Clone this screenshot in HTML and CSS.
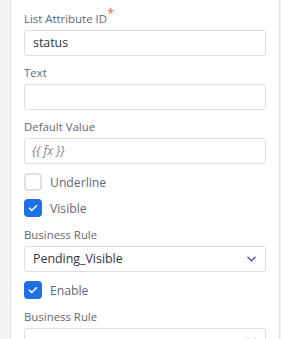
FILE: index.html
```html
<!DOCTYPE html>
<html lang="en">
<head>
<meta charset="UTF-8">
<meta name="viewport" content="width=device-width, initial-scale=1.0">
<title>Properties</title>
<link rel="stylesheet" href="styles.css">
</head>
<body>
<div class="panel">

  <div class="field">
    <label class="field-label">List Attribute ID<span class="req">*</span></label>
    <div class="input">status</div>
  </div>

  <div class="field">
    <label class="field-label">Text</label>
    <div class="input"></div>
  </div>

  <div class="field">
    <label class="field-label">Default Value</label>
    <div class="input placeholder">{{ fx }}</div>
  </div>

  <div class="check">
    <span class="box"></span>
    <span class="check-label">Underline</span>
  </div>

  <div class="check">
    <span class="box on">
      <svg viewBox="0 0 16 16"><path d="M4 8.3l2.6 2.6L12 5.4" fill="none" stroke="#fff" stroke-width="1.7" stroke-linecap="round" stroke-linejoin="round"/></svg>
    </span>
    <span class="check-label">Visible</span>
  </div>

  <div class="field">
    <label class="field-label">Business Rule</label>
    <div class="input select">
      <span>Pending_Visible</span>
      <svg class="chev" viewBox="0 0 10 6" width="9" height="6"><path d="M1 1l4 4 4-4" fill="none" stroke="#4a5d8a" stroke-width="1.6" stroke-linecap="round" stroke-linejoin="round"/></svg>
    </div>
  </div>

  <div class="check">
    <span class="box on">
      <svg viewBox="0 0 16 16"><path d="M4 8.3l2.6 2.6L12 5.4" fill="none" stroke="#fff" stroke-width="1.7" stroke-linecap="round" stroke-linejoin="round"/></svg>
    </span>
    <span class="check-label">Enable</span>
  </div>

  <div class="field">
    <label class="field-label">Business Rule</label>
    <div class="input select">
      <span></span>
      <svg class="chev" viewBox="0 0 10 6" width="9" height="6"><path d="M1 1l4 4 4-4" fill="none" stroke="#4a5d8a" stroke-width="1.6" stroke-linecap="round" stroke-linejoin="round"/></svg>
    </div>
  </div>

</div>
</body>
</html>
```

FILE: styles.css
```css
:root {
  --bg: #f3f4f7;
  --border: #e1e3e8;
  --input-border: #dcdee4;
  --label: #626878;
  --text: #2f3441;
  --muted: #7d8497;
  --blue: #1f6fe5;
  --req: #f2643a;
}

* { margin: 0; padding: 0; box-sizing: border-box; }

body {
  background: var(--bg);
  font-family: 'Open Sans', 'Noto Sans', sans-serif;
  height: 100vh;
  overflow: hidden;
}

.panel {
  margin-left: 10px;
  width: 270px;
  min-height: 100vh;
  background: #fff;
  border-left: 1px solid var(--border);
  border-right: 1px solid var(--border);
  padding: 10px 13px 0;
  display: flex;
  flex-direction: column;
}

/* Fields */
.field {
  display: flex;
  flex-direction: column;
  gap: 3px;
  margin-bottom: 9px;
}

.check + .field { margin-top: 2px; }

.field-label {
  font-size: 11.4px;
  line-height: 16px;
  color: var(--label);
}

.req {
  color: var(--req);
  font-size: 13px;
  position: relative;
  top: -5px;
}

.input {
  height: 26px;
  border: 1px solid var(--input-border);
  border-radius: 3px;
  padding: 0 8px;
  font-size: 12.4px;
  line-height: 24px;
  color: var(--text);
}

.input.placeholder {
  font-style: italic;
  color: var(--muted);
  font-size: 12px;
  padding-left: 7px;
}

.input.select {
  display: flex;
  align-items: center;
  justify-content: space-between;
  padding-right: 9px;
}

.chev { flex-shrink: 0; }

/* Checkboxes */
.check {
  display: flex;
  align-items: center;
  gap: 8px;
  height: 18px;
  margin-bottom: 8px;
}

.box {
  width: 18px;
  height: 18px;
  border: 2px solid #dfe0e6;
  border-radius: 4px;
  display: flex;
  align-items: center;
  justify-content: center;
  flex-shrink: 0;
}

.box.on {
  background: var(--blue);
  border-color: var(--blue);
}

.box svg { width: 16px; height: 16px; }

.check-label {
  font-size: 12.2px;
  color: var(--label);
}
```
